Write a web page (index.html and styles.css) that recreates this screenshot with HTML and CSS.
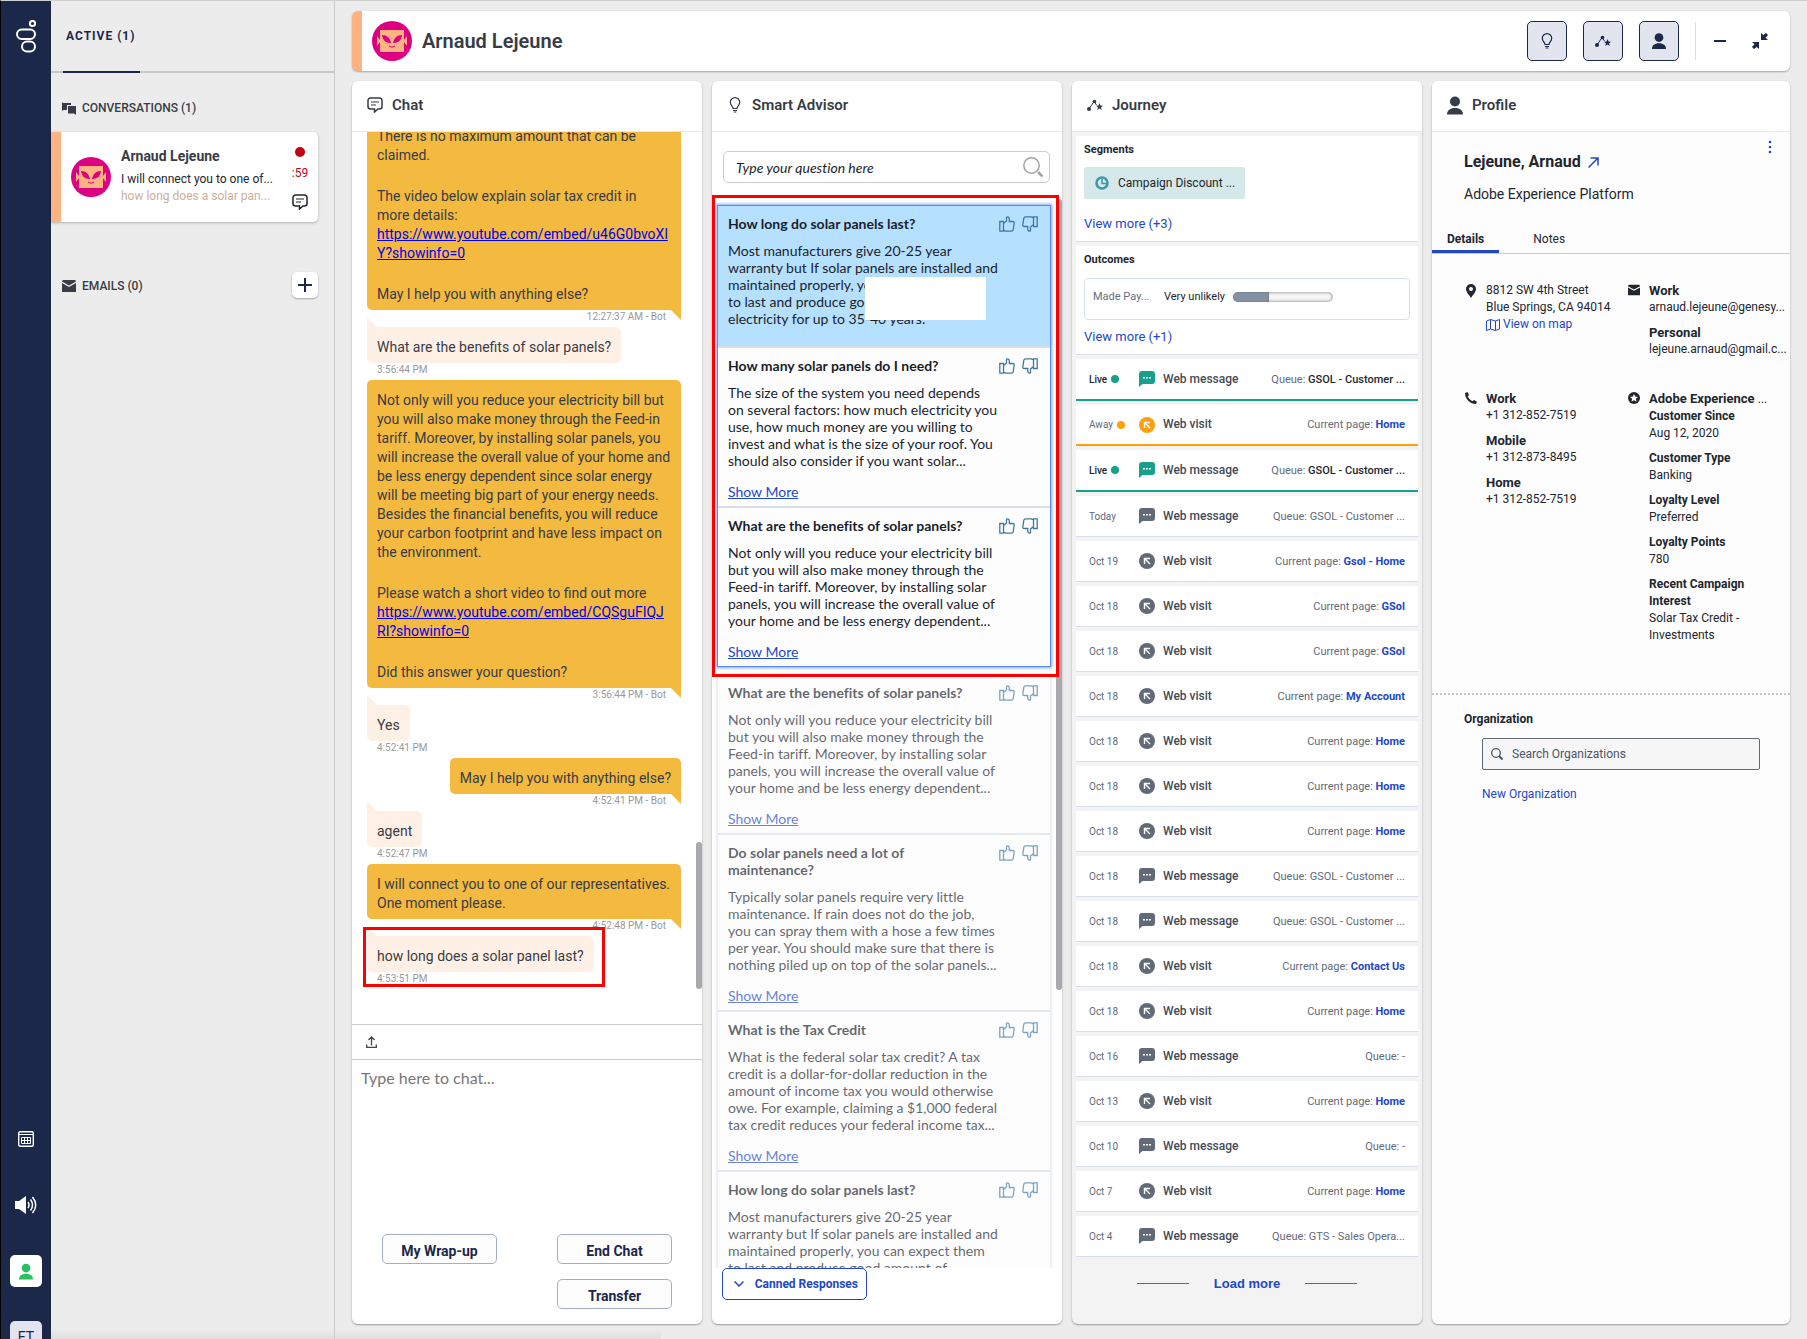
FILE: index.html
```html
<!DOCTYPE html>
<html lang="en">
<head>
<meta charset="utf-8">
<meta name="viewport" content="width=device-width, initial-scale=1">
<title>Agent Workspace</title>
<link rel="stylesheet" href="styles.css">
</head>
<body>
<svg class="sprite" aria-hidden="true">
  <symbol id="i-face" viewBox="0 0 40 40"><circle cx="20" cy="20" r="20" fill="#dd0080"/><path d="M8 9h24v22H8zM5 15l3 4v2l-3 4zM35 15l-3 4v2l3 4z" fill="#ffb380"/><path d="M10 14c5 0 8 3 9 8-5 0-8-2-9-8zM30 14c-5 0-8 3-9 8 5 0 8-2 9-8z" fill="#dd0080"/><path d="M17 25q3 2.500 6 0" stroke="#dd0080" fill="none"/></symbol>
  <symbol id="i-chat" viewBox="0 0 16 16"><path d="M3.500 1h9A2.500 2.500 0 0 1 15 3.500v6a2.500 2.500 0 0 1-2.500 2.500H11l-3.500 3V12h-4A2.500 2.500 0 0 1 1 9.500v-6A2.500 2.500 0 0 1 3.500 1z" fill="none" stroke="currentColor" stroke-width="1.500"/><path d="M4 5h8M4 8h5" stroke="currentColor" stroke-width="1.200"/></symbol>
  <symbol id="i-bulb" viewBox="0 0 16 16"><path d="M6 11.500C6 9 3.300 8.500 3.300 5.300a4.700 4.700 0 0 1 9.400 0C12.700 8.500 10 9 10 11.500zM6 13.500h4M6.700 15h2.600" fill="none" stroke="currentColor" stroke-width="1.200"/></symbol>
  <symbol id="i-journey" viewBox="0 0 16 16"><path d="M2 12l5-7.500 2.500 3.500" fill="none" stroke="currentColor"/><circle cx="2" cy="12" r="2"/><circle cx="7.500" cy="4.500" r="1.800"/><path d="M12.500 6l1 2.600 2.500.1-2 1.700.8 2.600-2.300-1.500-2.300 1.500.8-2.600-2-1.700 2.500-.1z"/></symbol>
  <symbol id="i-user" viewBox="0 0 16 18"><circle cx="8" cy="5" r="5"/><path d="M0 18c0-4 3-6.500 8-6.500s8 2.500 8 6.500z"/></symbol>
  <symbol id="i-mail" viewBox="0 0 14 12"><path d="M0 1.500Q0 0 1.500 0h11Q14 0 14 1.500L7 5.500zM0 3l7 4 7-4v9H0z"/></symbol>
  <symbol id="i-up" viewBox="0 0 16 16"><path d="M.8 5.500h3.700v9.700H.8zM4.500 7.500l3-2.500V1.500C8.500.300 10.300 1 10.300 3v2.500h3.500q1.500 0 1.400 1.500l-1 6.700q-.3 1.500-1.700 1.500H6.500l-2-1z" fill="none" stroke="currentColor" stroke-width="1.300"/></symbol>
  <symbol id="i-down" viewBox="0 0 16 16"><use href="#i-up" transform="rotate(180 8 8)"/></symbol>
  <symbol id="i-msg" viewBox="0 0 16 16"><path d="M3 0h10a3 3 0 0 1 3 3v7a3 3 0 0 1-3 3H3.500L0 16V3a3 3 0 0 1 3-3z"/><path d="M4 6h2v1.500H4zM7 6h2v1.500H7zM10 6h2v1.500h-2z" fill="#fff"/></symbol>
  <symbol id="i-visit" viewBox="0 0 16 16"><circle cx="8" cy="8" r="8"/><path d="M5.500 11V5.500H11M6 6l5 5" fill="none" stroke="#fff" stroke-width="1.400"/></symbol>
</svg>

<div class="app">
  <nav class="rail" aria-label="Main">
    <svg class="logo" viewBox="0 0 20 33" width="20" height="33" fill="none" stroke="#fff" stroke-width="2"><circle cx="16.500" cy="3.500" r="2.600"/><rect x="1" y="9.500" width="18" height="9.500" rx="4.700"/><rect x="6" y="21.500" width="13" height="10" rx="5"/></svg>
    <div class="rail-tools">
      <button class="rail-btn" aria-label="Calendar"><svg viewBox="0 0 16 16" width="16" height="16" fill="none" stroke="#fff"><rect x=".7" y=".7" width="14.600" height="14.600" rx="1.500" stroke-width="1.400"/><path d="M1 3.500h14M3.500 6.500h9v6h-9zM3.500 9.500h9M6.500 6.500v6M9.500 6.500v6"/></svg></button>
      <button class="rail-btn" aria-label="Sound"><svg viewBox="0 0 22 18" width="22" height="18" fill="none" stroke="#fff" stroke-width="1.500"><path d="M0 5h4l7-5v18l-7-5H0z" fill="#fff" stroke="none"/><path d="M13 6q2 3 0 6M15.500 3.500q4 5.500 0 11M17.500 1q6.500 8 0 16"/></svg></button>
      <button class="rail-btn rail-user" aria-label="Status"><svg width="14" height="17"><use href="#i-user"/></svg></button>
      <button class="rail-btn rail-initials">ET</button>
    </div>
  </nav>

  <aside class="sidebar">
    <div class="side-tabs"><span class="side-tab">ACTIVE (1)</span></div>
    <h2 class="side-head"><svg width="14" height="13" viewBox="0 0 14 13"><path d="M0 0l1 1h8v2H5v5H1.500L0 9z"/><path d="M6 4h8v9l-2-1.500H6z"/></svg>CONVERSATIONS (1)</h2>
    <article class="conv">
      <svg width="40" height="40"><use href="#i-face"/></svg>
      <div class="conv-text">
        <h3 class="conv-name">Arnaud Lejeune</h3>
        <p>I will connect you to one of...</p>
        <p class="conv-last">how long does a solar pan...</p>
      </div>
      <div class="conv-meta"><i class="dot-red"></i><span>:59</span><svg class="ink" width="16" height="16"><use href="#i-chat"/></svg></div>
    </article>
    <div class="side-emails">
      <h2 class="side-head"><svg width="14" height="12"><use href="#i-mail"/></svg>EMAILS (0)</h2>
      <button class="add" aria-label="New email"><svg width="14" height="14" viewBox="0 0 14 14"><path d="M7 0v14M0 7h14" stroke="#1b2849" stroke-width="2"/></svg></button>
    </div>
  </aside>

  <main class="main">
    <header class="topbar">
      <svg width="40" height="40"><use href="#i-face"/></svg>
      <h1 class="topbar-name">Arnaud Lejeune</h1>
      <div class="topbar-tools">
        <button class="tool" aria-label="Smart Advisor"><svg width="16" height="16"><use href="#i-bulb"/></svg></button>
        <button class="tool" aria-label="Journey"><svg width="16" height="16"><use href="#i-journey"/></svg></button>
        <button class="tool" aria-label="Profile"><svg width="14" height="16"><use href="#i-user"/></svg></button>
      </div>
      <div class="topbar-window">
        <button class="plain" aria-label="Minimize"><svg width="12" height="16" viewBox="0 0 12 16"><path d="M0 7h12v2H0z"/></svg></button>
        <button class="plain" aria-label="Collapse"><svg width="16" height="16" viewBox="0 0 16 16"><path d="M9 7V0l2.300 2L14 0l2 2-2.500 2.700L16 7zM7 9v7l-2.300-2L2 16l-2-2 2.500-2.700L0 9z"/></svg></button>
      </div>
    </header>

    <div class="panels">
      <section class="panel chat">
        <h2 class="panel-head"><svg width="16" height="16"><use href="#i-chat"/></svg>Chat</h2>
        <div class="log">
          <div class="msg bot wide">
            <div class="bubble">
              <p>There is no maximum amount that can be claimed.</p>
              <p>The video below explain solar tax credit in more details: <a href="#video1">https://www.youtube.com/embed/u46G0bvoXlY?showinfo=0</a></p>
              <p>May I help you with anything else?</p>
            </div>
            <time>12:27:37 AM - Bot</time>
          </div>
          <div class="msg guest"><div class="bubble">What are the benefits of solar panels?</div><time>3:56:44 PM</time></div>
          <div class="msg bot wide">
            <div class="bubble">
              <p>Not only will you reduce your electricity bill but you will also make money through the Feed-in tariff. Moreover, by installing solar panels, you will increase the overall value of your home and be less energy dependent since solar energy will be meeting big part of your energy needs. Besides the financial benefits, you will reduce your carbon footprint and have less impact on the environment.</p>
              <p>Please watch a short video to find out more <a href="#video2">https://www.youtube.com/embed/CQSguFIQJRI?showinfo=0</a></p>
              <p>Did this answer your question?</p>
            </div>
            <time>3:56:44 PM - Bot</time>
          </div>
          <div class="msg guest"><div class="bubble">Yes</div><time>4:52:41 PM</time></div>
          <div class="msg bot"><div class="bubble">May I help you with anything else?</div><time>4:52:41 PM - Bot</time></div>
          <div class="msg guest"><div class="bubble">agent</div><time>4:52:47 PM</time></div>
          <div class="msg bot wide"><div class="bubble">I will connect you to one of our representatives. One moment please.</div><time>4:52:48 PM - Bot</time></div>
          <div class="msg guest marked"><div class="bubble">how long does a solar panel last?</div><time>4:53:51 PM</time></div>
          <i class="thumb chat-thumb"></i>
        </div>
        <div class="attach"><button class="plain" aria-label="Attach a file"><svg width="11" height="12" viewBox="0 0 11 12" fill="none" stroke="#444" stroke-width="1.300"><path d="M5.500 9.500V1M2.500 4l3-3 3 3M.7 8.500v2.800h9.600V8.500"/></svg></button></div>
        <textarea class="compose" aria-label="Message" placeholder="Type here to chat..."></textarea>
        <div class="chat-actions">
          <button class="btn">My Wrap-up</button>
          <button class="btn">End Chat</button>
          <button class="btn btn-second">Transfer</button>
        </div>
      </section>

      <section class="panel advisor">
        <h2 class="panel-head"><svg width="16" height="16"><use href="#i-bulb"/></svg>Smart Advisor</h2>
        <div class="ask">
          <input type="text" aria-label="Question" placeholder="Type your question here">
          <svg width="20" height="20" viewBox="0 0 20 20" fill="none" stroke="#a3a3a3"><circle cx="8.500" cy="8.500" r="7.700" stroke-width="1.500"/><path d="M15 15l4.500 4.500" stroke-width="2.500"/></svg>
        </div>
        <div class="answers">
          <div class="group current">
            <article class="answer picked">
              <div class="answer-top"><h3>How long do solar panels last?</h3><span class="vote"><button class="plain" aria-label="Helpful"><svg width="16" height="16"><use href="#i-up"/></svg></button><button class="plain" aria-label="Not helpful"><svg width="16" height="16"><use href="#i-down"/></svg></button></span></div>
              <p>Most manufacturers give 20-25 year<br>warranty but If solar panels are installed and<br>maintained properly, you can expect them<br>to last and produce good amount of<br>electricity for up to 35-40 years.</p>
              <i class="redacted"></i>
            </article>
            <article class="answer">
              <div class="answer-top"><h3>How many solar panels do I need?</h3><span class="vote"><button class="plain" aria-label="Helpful"><svg width="16" height="16"><use href="#i-up"/></svg></button><button class="plain" aria-label="Not helpful"><svg width="16" height="16"><use href="#i-down"/></svg></button></span></div>
              <p>The size of the system you need depends<br>on several factors: how much electricity you<br>use, how much money are you willing to<br>invest and what is the size of your roof. You<br>should also consider if you want solar...</p>
              <a href="#more">Show More</a>
            </article>
            <article class="answer">
              <div class="answer-top"><h3>What are the benefits of solar panels?</h3><span class="vote"><button class="plain" aria-label="Helpful"><svg width="16" height="16"><use href="#i-up"/></svg></button><button class="plain" aria-label="Not helpful"><svg width="16" height="16"><use href="#i-down"/></svg></button></span></div>
              <p>Not only will you reduce your electricity bill<br>but you will also make money through the<br>Feed-in tariff. Moreover, by installing solar<br>panels, you will increase the overall value of<br>your home and be less energy dependent...</p>
              <a href="#more">Show More</a>
            </article>
          </div>
          <div class="group older">
            <article class="answer">
              <div class="answer-top"><h3>What are the benefits of solar panels?</h3><span class="vote"><button class="plain" aria-label="Helpful"><svg width="16" height="16"><use href="#i-up"/></svg></button><button class="plain" aria-label="Not helpful"><svg width="16" height="16"><use href="#i-down"/></svg></button></span></div>
              <p>Not only will you reduce your electricity bill<br>but you will also make money through the<br>Feed-in tariff. Moreover, by installing solar<br>panels, you will increase the overall value of<br>your home and be less energy dependent...</p>
              <a href="#more">Show More</a>
            </article>
            <article class="answer">
              <div class="answer-top"><h3>Do solar panels need a lot of<br>maintenance?</h3><span class="vote"><button class="plain" aria-label="Helpful"><svg width="16" height="16"><use href="#i-up"/></svg></button><button class="plain" aria-label="Not helpful"><svg width="16" height="16"><use href="#i-down"/></svg></button></span></div>
              <p>Typically solar panels require very little<br>maintenance. If rain does not do the job,<br>you can spray them with a hose a few times<br>per year. You should make sure that there is<br>nothing piled up on top of the solar panels...</p>
              <a href="#more">Show More</a>
            </article>
            <article class="answer">
              <div class="answer-top"><h3>What is the Tax Credit</h3><span class="vote"><button class="plain" aria-label="Helpful"><svg width="16" height="16"><use href="#i-up"/></svg></button><button class="plain" aria-label="Not helpful"><svg width="16" height="16"><use href="#i-down"/></svg></button></span></div>
              <p>What is the federal solar tax credit? A tax<br>credit is a dollar-for-dollar reduction in the<br>amount of income tax you would otherwise<br>owe. For example, claiming a $1,000 federal<br>tax credit reduces your federal income tax...</p>
              <a href="#more">Show More</a>
            </article>
            <article class="answer">
              <div class="answer-top"><h3>How long do solar panels last?</h3><span class="vote"><button class="plain" aria-label="Helpful"><svg width="16" height="16"><use href="#i-up"/></svg></button><button class="plain" aria-label="Not helpful"><svg width="16" height="16"><use href="#i-down"/></svg></button></span></div>
              <p>Most manufacturers give 20-25 year<br>warranty but If solar panels are installed and<br>maintained properly, you can expect them<br>to last and produce good amount of<br>electricity for up to 35-40 years.</p>
            </article>
          </div>
          <i class="thumb advisor-thumb"></i>
        </div>
        <div class="advisor-foot"><button class="canned"><svg width="10" height="6" viewBox="0 0 10 6" fill="none" stroke="currentColor" stroke-width="1.500"><path d="M.5.5L5 5 9.500.5"/></svg>Canned Responses</button></div>
      </section>

      <section class="panel journey">
        <h2 class="panel-head"><svg width="16" height="16"><use href="#i-journey"/></svg>Journey</h2>
        <div class="journey-body">
          <div class="card segments">
            <h3>Segments</h3>
            <span class="chip"><svg width="14" height="14" viewBox="0 0 14 14" fill="none" stroke="#3f98aa"><circle cx="7" cy="7" r="5.500" stroke-width="2.600"/><path d="M7 3v4.500h4" stroke-width="1.500"/></svg>Campaign Discount ...</span>
            <a href="#segments">View more (+3)</a>
          </div>
          <div class="card outcomes">
            <h3>Outcomes</h3>
            <div class="outcome"><span class="muted">Made Pay...</span><span>Very unlikely</span><span class="meter"><span class="meter-fill" style="width:36%"></span></span></div>
            <a href="#outcomes">View more (+1)</a>
          </div>
          <ul class="events">
            <li class="event live"><span class="when">Live<i></i></span><svg width="16" height="16"><use href="#i-msg"/></svg><b>Web message</b><span class="info">Queue: <strong>GSOL - Customer ...</strong></span></li>
            <li class="event away"><span class="when">Away<i></i></span><svg width="16" height="16"><use href="#i-visit"/></svg><b>Web visit</b><span class="info">Current page: <a href="#p">Home</a></span></li>
            <li class="event live"><span class="when">Live<i></i></span><svg width="16" height="16"><use href="#i-msg"/></svg><b>Web message</b><span class="info">Queue: <strong>GSOL - Customer ...</strong></span></li>
            <li class="event"><span class="when">Today</span><svg width="16" height="16"><use href="#i-msg"/></svg><b>Web message</b><span class="info">Queue: GSOL - Customer ...</span></li>
            <li class="event"><span class="when">Oct 19</span><svg width="16" height="16"><use href="#i-visit"/></svg><b>Web visit</b><span class="info">Current page: <a href="#p">Gsol - Home</a></span></li>
            <li class="event"><span class="when">Oct 18</span><svg width="16" height="16"><use href="#i-visit"/></svg><b>Web visit</b><span class="info">Current page: <a href="#p">GSol</a></span></li>
            <li class="event"><span class="when">Oct 18</span><svg width="16" height="16"><use href="#i-visit"/></svg><b>Web visit</b><span class="info">Current page: <a href="#p">GSol</a></span></li>
            <li class="event"><span class="when">Oct 18</span><svg width="16" height="16"><use href="#i-visit"/></svg><b>Web visit</b><span class="info">Current page: <a href="#p">My Account</a></span></li>
            <li class="event"><span class="when">Oct 18</span><svg width="16" height="16"><use href="#i-visit"/></svg><b>Web visit</b><span class="info">Current page: <a href="#p">Home</a></span></li>
            <li class="event"><span class="when">Oct 18</span><svg width="16" height="16"><use href="#i-visit"/></svg><b>Web visit</b><span class="info">Current page: <a href="#p">Home</a></span></li>
            <li class="event"><span class="when">Oct 18</span><svg width="16" height="16"><use href="#i-visit"/></svg><b>Web visit</b><span class="info">Current page: <a href="#p">Home</a></span></li>
            <li class="event"><span class="when">Oct 18</span><svg width="16" height="16"><use href="#i-msg"/></svg><b>Web message</b><span class="info">Queue: GSOL - Customer ...</span></li>
            <li class="event"><span class="when">Oct 18</span><svg width="16" height="16"><use href="#i-msg"/></svg><b>Web message</b><span class="info">Queue: GSOL - Customer ...</span></li>
            <li class="event"><span class="when">Oct 18</span><svg width="16" height="16"><use href="#i-visit"/></svg><b>Web visit</b><span class="info">Current page: <a href="#p">Contact Us</a></span></li>
            <li class="event"><span class="when">Oct 18</span><svg width="16" height="16"><use href="#i-visit"/></svg><b>Web visit</b><span class="info">Current page: <a href="#p">Home</a></span></li>
            <li class="event"><span class="when">Oct 16</span><svg width="16" height="16"><use href="#i-msg"/></svg><b>Web message</b><span class="info">Queue: -</span></li>
            <li class="event"><span class="when">Oct 13</span><svg width="16" height="16"><use href="#i-visit"/></svg><b>Web visit</b><span class="info">Current page: <a href="#p">Home</a></span></li>
            <li class="event"><span class="when">Oct 10</span><svg width="16" height="16"><use href="#i-msg"/></svg><b>Web message</b><span class="info">Queue: -</span></li>
            <li class="event"><span class="when">Oct 7</span><svg width="16" height="16"><use href="#i-visit"/></svg><b>Web visit</b><span class="info">Current page: <a href="#p">Home</a></span></li>
            <li class="event"><span class="when">Oct 4</span><svg width="16" height="16"><use href="#i-msg"/></svg><b>Web message</b><span class="info">Queue: GTS - Sales Opera...</span></li>
          </ul>
          <div class="load"><button class="plain">Load more</button></div>
        </div>
      </section>

      <section class="panel profile">
        <h2 class="panel-head"><svg width="16" height="19"><use href="#i-user"/></svg>Profile</h2>
        <div class="profile-top">
          <div>
            <h3 class="profile-name">Lejeune, Arnaud <svg width="11" height="11" viewBox="0 0 11 11" fill="none" stroke="#2248c4" stroke-width="1.500"><path d="M.5 10.500L10 1M2.500 1H10v7.500"/></svg></h3>
            <p class="profile-sub">Adobe Experience Platform</p>
          </div>
          <button class="plain more" aria-label="More"><svg width="4" height="14" viewBox="0 0 4 14"><circle cx="2" cy="2" r="1.300"/><circle cx="2" cy="7" r="1.300"/><circle cx="2" cy="12" r="1.300"/></svg></button>
        </div>
        <div class="tabs"><button class="tab on">Details</button><button class="tab">Notes</button></div>
        <div class="details">
          <div class="detail">
            <svg width="12" height="14" viewBox="0 0 12 14"><path d="M6 0a5 5 0 0 1 5 5c0 3-2.500 5-5 9-2.500-4-5-6-5-9a5 5 0 0 1 5-5z"/><circle cx="6" cy="5" r="2" fill="#fff"/></svg>
            <div><p>8812 SW 4th Street</p><p>Blue Springs, CA 94014</p><p><a class="map" href="#map"><svg width="14" height="12" viewBox="0 0 14 12" fill="none" stroke="currentColor"><path d="M.5 2l4-1.500 5 1.500 4-1.500V10l-4 1.500-5-1.500-4 1.500zM4.500.5V10M9.500 2v9.500"/></svg>View on map</a></p></div>
          </div>
          <div class="detail">
            <svg width="13" height="12"><use href="#i-mail"/></svg>
            <div><h4>Work</h4><p class="clip">arnaud.lejeune@genesy...</p><h4 class="next">Personal</h4><p class="clip">lejeune.arnaud@gmail.c...</p></div>
          </div>
          <div class="detail">
            <svg width="12" height="12" viewBox="0 0 12 12"><path d="M0 1l2.500-1L4 3.200 2.700 4.500Q4 7.500 7.300 9.200L9 8l3 1.700-1 2.300C5 12 0 7 0 1z"/></svg>
            <div><h4>Work</h4><p>+1 312-852-7519</p><h4 class="next">Mobile</h4><p>+1 312-873-8495</p><h4 class="next">Home</h4><p>+1 312-852-7519</p></div>
          </div>
          <div class="detail">
            <svg width="12" height="12" viewBox="0 0 12 12"><circle cx="6" cy="6" r="6"/><path d="M6 2l1.200 2.600 2.800.3-2.100 1.900.6 2.800L6 8.200 3.500 9.600l.6-2.800L2 4.900l2.800-.3z" fill="#fff"/></svg>
            <div class="traits"><h4 class="clip">Adobe Experience <span class="rest">...</span></h4><h5>Customer Since</h5><p>Aug 12, 2020</p><h5 class="next">Customer Type</h5><p>Banking</p><h5 class="next">Loyalty Level</h5><p>Preferred</p><h5 class="next">Loyalty Points</h5><p>780</p><h5 class="next">Recent Campaign Interest</h5><p>Solar Tax Credit -<br>Investments</p></div>
          </div>
        </div>
        <div class="org">
          <label for="org">Organization</label>
          <div class="org-box"><svg width="12" height="12" viewBox="0 0 12 12" fill="none" stroke="#4b5568"><circle cx="5" cy="5" r="4.300" stroke-width="1.300"/><path d="M8 8l3.500 3.500" stroke-width="2"/></svg><input id="org" type="text" placeholder="Search Organizations"></div>
          <a href="#new-org">New Organization</a>
        </div>
      </section>
    </div>
  </main>
</div>
</body>
</html>
```
FILE: styles.css
```css
*, *::before, *::after { box-sizing: border-box; }
body { margin: 0; font: 12px/17px Roboto, "Liberation Sans", sans-serif; color: #22262e; background: #ececec; }
h1, h2, h3, h4, h5, p, ul { margin: 0; padding: 0; font-size: inherit; }
button, input, textarea { font: inherit; color: inherit; }
button { cursor: pointer; padding: 0; }
svg { display: block; flex: none; fill: currentColor; }
svg[fill="none"] { fill: none; }
a { color: #2248c4; text-decoration: none; }
.sprite { position: absolute; width: 0; height: 0; }
.plain { border: 0; background: none; }

.app { display: flex; height: 100vh; min-height: 720px; border-top: 1px solid #cfcfcf; border-left: 1px solid #000; overflow: hidden; background: linear-gradient(to top, #dedede, #ececec) left bottom / 660px 10px no-repeat; }

/* navigation rail */
.rail { flex: 0 0 50px; display: flex; flex-direction: column; align-items: center; justify-content: space-between; padding-top: 19px; background: #1b2849; overflow: hidden; }
.rail-tools { display: flex; flex-direction: column; align-items: center; gap: 34px; margin-bottom: -14px; }
.rail-btn { display: flex; align-items: center; justify-content: center; width: 32px; height: 32px; border: 0; border-radius: 5px; background: none; }
.rail-user { background: #fff; color: #27c25f; }
.rail-initials { background: #e2e5f0; color: #1b2849; font-size: 14px; }

/* conversation list */
.sidebar { flex: 0 0 284px; border-right: 1px solid #cacaca; }
.side-tabs { height: 72px; padding: 0 12px; border-bottom: 2px solid #c8c8c8; display: flex; }
.side-tab { height: 72px; width: 77px; padding: 26px 0 0 3px; border-bottom: 2px solid #1b2849; color: #1b2849; font-size: 12px; line-height: 18px; font-weight: 700; letter-spacing: 1px; white-space: nowrap; }
.side-head { display: flex; align-items: center; gap: 6px; color: #373c46; font-size: 12px; font-weight: 500; }
.sidebar > .side-head { padding: 27px 11px 15px; }
.conv { display: flex; align-items: center; gap: 10px; height: 90px; margin-right: 16px; padding: 0 10px; border-left: 10px solid #ffb380; border-radius: 0 5px 5px 0; background: #fff; box-shadow: 0 1px 3px rgba(0,0,0,.25); }
.conv-text { flex: 1; padding-bottom: 2px; white-space: nowrap; }
.conv-name { margin-bottom: 6px; font-size: 14px; font-weight: 700; color: #373c46; }
.conv-last { color: #cfae98; }
.conv-meta { display: flex; flex-direction: column; align-items: center; color: #c40017; width: 16px; padding-top: 2px; }
.dot-red { width: 10px; height: 10px; margin-bottom: 8px; border-radius: 50%; background: #c40017; }
.ink { color: #22262e; margin-top: 12px; }
.side-emails { display: flex; justify-content: space-between; align-items: center; margin-top: 50px; padding: 0 16px 0 11px; }
.side-emails .side-head { padding-top: 2px; }
.add { display: flex; align-items: center; justify-content: center; width: 26px; height: 26px; border: 0; border-radius: 5px; background: #fff; box-shadow: 0 1px 2px rgba(0,0,0,.3); }

/* workspace */
.main { flex: 1; min-width: 0; display: flex; flex-direction: column; gap: 10px; padding: 10px 17px 15px; }
.topbar { flex: 0 0 60px; display: flex; align-items: center; padding: 0 22px 0 10px; border-left: 10px solid #ffb380; border-radius: 6px; background: #fff; box-shadow: 0 1px 2px rgba(0,0,0,.3); color: #1b2849; }
.topbar-name { flex: 1; margin-left: 10px; font-size: 20px; line-height: 24px; font-weight: 600; color: #373c46; }
.topbar-tools { display: flex; gap: 16px; padding-right: 16px; }
.tool { display: flex; align-items: center; justify-content: center; width: 40px; height: 40px; border: 1px solid #1b2849; border-radius: 5px; background: #e2e5ee; }
.topbar-window { display: flex; align-items: center; gap: 26px; height: 38px; padding-left: 18px; border-left: 1px solid #dcdcdc; }
.panels { flex: 1; min-height: 0; display: grid; grid-template-columns: 350fr 350fr 350fr 358fr; gap: 10px; }
.panel { min-width: 0; display: flex; flex-direction: column; overflow: hidden; border-radius: 6px; background: #fff; box-shadow: 0 1px 2px rgba(0,0,0,.35); }
.panel-head { flex: 0 0 51px; display: flex; align-items: center; gap: 9px; padding: 0 15px 2px; border-bottom: 1px solid #e9e9e9; font-size: 15px; line-height: 20px; font-weight: 600; color: #373c46; }
.thumb { position: absolute; right: 0; width: 6px; border-radius: 3px; background: #a9a9ae; }

/* chat */
.log { position: relative; flex: 1; min-height: 0; display: flex; flex-direction: column; justify-content: flex-end; padding: 0 21px 35px 15px; overflow: hidden; font-size: 14px; line-height: 19px; color: #373c46; }
.msg { position: relative; display: flex; flex-direction: column; align-items: flex-start; flex: none; }
.bot { align-items: flex-end; }
.wide .bubble { width: 100%; }
.bubble { position: relative; padding: 11px 10px 6px; border-radius: 5px; }
.bubble p + p { margin-top: 22px; }
.bubble a { color: #00e; text-decoration: underline; word-break: break-all; display: block; }
.bot .bubble { background: #f4b93f; border-bottom-right-radius: 0; }
.guest .bubble { background: #fff0e5; border-top-left-radius: 0; }
.bubble::after { content: ""; position: absolute; width: 10px; height: 10px; }
.bot .bubble::after { right: 0; top: 100%; background: #f4b93f; clip-path: polygon(0 0, 100% 0, 100% 100%); }
.guest .bubble::after { left: 0; bottom: 100%; background: #fff0e5; clip-path: polygon(0 0, 0 100%, 100% 100%); }
.msg time { margin-bottom: 4px; padding: 0 15px 0 10px; font-size: 10px; line-height: 13px; color: #999; }
.marked::before { content: ""; position: absolute; z-index: 1; left: -4px; top: -9px; width: 242px; height: 60px; border: 3px solid #f00; }
.chat-thumb { bottom: 35px; height: 147px; }
.attach { flex: 0 0 35px; display: flex; align-items: center; padding: 0 14px; border-top: 1px solid #cacaca; }
.compose { flex: 0 0 175px; padding: 6px 9px; border: 0; border-top: 1px solid #cacaca; resize: none; outline: 0; font: 16px/24px Lato, sans-serif; }
.compose::placeholder { color: #777; opacity: 1; }
.chat-actions { display: grid; grid-template-columns: 115px 115px; justify-content: space-between; gap: 15px 0; padding: 0 30px 15px; }
.btn { height: 30px; border: 1px solid #a3adc9; border-radius: 5px; background: #fdfdfd; color: #1b2849; font-size: 14px; font-weight: 700; padding-top: 4px; }
.btn-second { grid-column: 2; }

/* smart advisor */
.advisor, .advisor input { font-family: Lato, sans-serif; font-variant-ligatures: none; color: #1b1e2c; }
.advisor .panel-head { font-family: Roboto, sans-serif; color: #373c46; }
.ask { display: flex; align-items: center; height: 32px; margin: 19px 12px 12px 11px; padding: 0 6px 0 12px; border: 1px solid #ccc; border-radius: 5px; flex: none; }
.ask input { flex: 1; min-width: 0; border: 0; outline: 0; padding: 0; font-size: 14px; font-style: italic; }
.ask input::placeholder { color: #1b1e2c; opacity: 1; }
.answers { position: relative; flex: 1; min-height: 0; padding: 10px 11px 0 5px; overflow: hidden; font-size: 14px; line-height: 17px; }
.group { border: 1px solid transparent; }
.current { position: relative; z-index: 1; border-color: #5b8cf5; box-shadow: 0 0 3px 1px #7ba7ff; }
.current::after { content: ""; position: absolute; top: -11px; bottom: -11px; left: -6px; right: -9px; border: 3px solid #f00; }
.older { margin-top: 7px; opacity: .68; border-color: #e2e5f0; box-shadow: 0 0 2px 1px #e2e5f0; }
.answer { position: relative; padding: 9px 12px 6px 10px; background: #fdfdfd; border-bottom: 2px solid #dadee8; }
.current .answer:last-child { border-bottom: 0; }
.picked { padding-bottom: 19px; background: #b5e0ff; }
.answer-top { display: flex; justify-content: space-between; margin-bottom: 10px; }
.answer h3 { font-weight: 700; }
.vote { display: flex; gap: 7px; color: #3f78a3; height: 17px; }
.answer p { white-space: nowrap; }
.answer > a { display: block; margin-top: 14px; text-decoration: underline; }
.redacted { position: absolute; left: 147px; top: 71px; width: 121px; height: 43px; background: #fff; }
.advisor-thumb { top: 4px; height: 791px; }
.advisor-foot { flex: 0 0 56px; padding-left: 10px; }
.canned { display: flex; align-items: center; justify-content: space-between; width: 145px; height: 32px; padding: 0 8px 0 11px; border: 1px solid #2248c4; border-radius: 5px; background: #fff; color: #2248c4; font: 700 12px Roboto, sans-serif; }

/* journey */
.journey { background: #f3f3f3; }
.journey .panel-head { background: #fff; }
.journey-body { display: flex; flex-direction: column; gap: 4px; padding: 4px; }
.card { padding: 5px 8px 9px; background: #fff; border-bottom: 1px solid #d8dfea; }
.card h3 { font-size: 11px; font-weight: 700; }
.card > a { display: block; font-size: 13px; }
.chip { display: inline-flex; align-items: center; gap: 9px; height: 32px; margin: 9px 0 16px; padding: 0 10px 0 11px; border-radius: 2px; background: #d5e8ea; }
.outcome { display: flex; align-items: flex-start; height: 42px; margin: 10px 0 8px; padding: 9px 8px; border: 1px solid #d8dfea; border-radius: 4px; font-size: 11px; }
.muted { width: 71px; color: #666d7c; }
.meter { width: 100px; height: 10px; margin: 4px 0 0 8px; border-radius: 5px; overflow: hidden; background: #f7f7f7; box-shadow: inset 0 0 3px 1px #aaa; }
.meter-fill { display: block; height: 100%; background: #8391a4; box-shadow: inset 0 0 2px #5d6673; }
.events { display: flex; flex-direction: column; gap: 4px; list-style: none; }
.event { display: grid; grid-template-columns: 50px 24px 1fr auto; align-items: center; height: 41px; padding: 0 13px; background: #fff; border-bottom: 1px solid #d8dfea; color: #626a79; }
.event > svg { color: #626a79; }
.event b { font-weight: 500; color: #444b57; font-size: 12px; }
.when { display: flex; align-items: center; gap: 4px; font-size: 10px; }
.when i { width: 8px; height: 8px; border-radius: 50%; background: currentColor; }
.info { font-size: 11px; }
.info a, .info strong { font-weight: 700; }
.info strong { font-weight: 500; color: #22262e; }
.live { height: 42px; border-bottom: 2px solid #17a08c; }
.live .when { color: #22262e; font-weight: 500; }
.event.live > svg, .live .when i { color: #17a08c; }
.away { border-bottom: 2px solid #ff9e0f; }
.event.away > svg, .away .when i { color: #ff9e0f; }
.load { display: flex; align-items: center; justify-content: center; gap: 25px; padding-top: 14px; }
.load::before, .load::after { content: ""; width: 52px; height: 1px; background: #626a79; }
.load button { color: #2248c4; font: 700 13px/17px "Liberation Sans", sans-serif; }

/* profile */
.profile { background: #fdfdfd; }
.profile .panel-head { background: #fff; }
.profile-top { display: flex; justify-content: space-between; align-items: flex-start; padding: 8px 18px 0 32px; }
.profile-name { display: flex; align-items: center; gap: 7px; margin-top: 10px; font-size: 16px; line-height: 24px; font-weight: 700; }
.profile-sub { margin-top: 10px; font-size: 14px; line-height: 20px; }
.more { color: #2248c4; }
.tabs { display: flex; height: 48px; margin-top: 2px; border-bottom: 1px solid #cacaca; align-items: flex-end; }
.tab { height: 24px; padding: 0 15px; border: 0; border-bottom: 3px solid transparent; background: none; }
.on { border-color: #2248c4; font-weight: 700; margin-right: 19px; }
.details { display: grid; grid-template-columns: 163px 1fr; row-gap: 32px; padding: 28px 4px 49px 33px; border-bottom: 2px dotted #c8c8c8; }
.detail { display: flex; gap: 9px; min-width: 0; }
.detail > svg { margin-top: 2px; width: 12px; }
.detail > div { min-width: 0; }
.detail h4 { font-size: 13px; font-weight: 700; }
.detail h5 { font-size: 12px; font-weight: 700; }
.next { margin-top: 8px; }
.clip { white-space: nowrap; }
.rest { font-size: 12px; font-weight: 400; }
.traits { width: 120px; }
.map { display: inline-flex; align-items: center; gap: 3px; }
.org { display: flex; flex-direction: column; padding: 16px 30px 0 32px; }
.org label { font-weight: 700; font-size: 12px; }
.org-box { display: flex; align-items: center; gap: 9px; height: 32px; margin: 10px 0 16px 18px; padding: 0 8px; border: 1px solid #626a79; border-radius: 2px; background: #f6f6f7; color: #4b5568; }
.org-box input { flex: 1; min-width: 0; padding: 0; border: 0; outline: 0; background: none; }
.org-box input::placeholder { color: #4b5568; opacity: 1; }
.org > a { margin-left: 18px; }
```
